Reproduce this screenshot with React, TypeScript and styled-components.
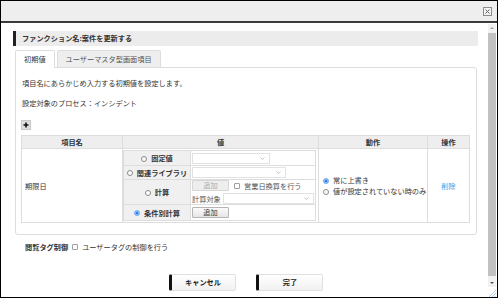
import React from "react";
import styled, { createGlobalStyle } from "styled-components";

const GlobalStyle = createGlobalStyle`
  html, body {
    margin: 0;
    padding: 0;
    background: #fff;
  }
  body {
    font-family: "Noto Sans CJK JP", "Noto Sans", sans-serif;
    font-size: 7.2px;
    color: #333;
  }
  * {
    box-sizing: border-box;
  }
`;

const Window = styled.div`
  width: 498px;
  height: 298px;
  border: 1px solid #000;
  display: flex;
  flex-direction: column;
  background: #fff;
  overflow: hidden;
`;

const TitleBar = styled.div`
  height: 22px;
  flex-shrink: 0;
  background: #eeeeee;
  border-bottom: 2px solid #3a3a3a;
  display: flex;
  justify-content: flex-end;
  align-items: flex-start;
  padding: 6px 5px 0 0;
`;

const Body = styled.div`
  flex: 1;
  display: flex;
  min-height: 0;
`;

const Main = styled.div`
  flex: 1;
  padding: 8px 10px 0 12px;
  display: flex;
  flex-direction: column;
`;

const ScrollColumn = styled.div`
  width: 10px;
  display: flex;
  flex-direction: column;
  padding: 1px 1px 0 0;
`;

const Track = styled.div`
  flex: 1;
  background: #f1f1f1;
  display: flex;
  flex-direction: column;
  align-items: center;
  padding: 3px 0 3px;
`;

const Arrow = styled.div<{ $down?: boolean }>`
  width: 0;
  height: 0;
  border-left: 2px solid transparent;
  border-right: 2px solid transparent;
  ${(p) =>
    p.$down ? "border-top: 2px solid #555;" : "border-bottom: 2px solid #a3a3a3;"}
`;

const Thumb = styled.div`
  width: 8px;
  flex: 1;
  background: #c1c1c1;
  margin: 4px 0 6px;
`;

const Grip = styled.div`
  height: 10px;
  display: flex;
  justify-content: flex-end;
  align-items: flex-end;
`;

const SectionHeader = styled.div`
  height: 15px;
  background: #ececec;
  border-left: 3px solid #222;
  padding-left: 6px;
  font-weight: bold;
  line-height: 15px;
  color: #333;
`;

const Tabs = styled.div`
  display: flex;
  gap: 2px;
  margin: 4px 0 0 2px;
`;

const Tab = styled.div<{ $active?: boolean }>`
  height: 17px;
  padding: 0 8px;
  line-height: 16px;
  border: 1px solid #dddddd;
  border-bottom: none;
  border-radius: 2px 2px 0 0;
  background: ${(p) => (p.$active ? "#fff" : "#eeeeee")};
  color: ${(p) => (p.$active ? "#333" : "#555")};
  position: relative;
  ${(p) => (p.$active ? "margin-bottom: -1px; height: 18px;" : "")}
`;

const Panel = styled.div`
  margin: 0 1px 0 2px;
  border: 1px solid #dddddd;
  border-radius: 0 3px 3px 3px;
  padding: 9px 6px 11px 5px;
  display: flex;
  flex-direction: column;
  align-items: flex-start;
`;

const Desc = styled.div`
  line-height: 12px;
  padding-left: 1px;
  & + & {
    margin-top: 8px;
  }
`;

const PlusButton = styled.div`
  margin-top: 11px;
  width: 10px;
  height: 10px;
  background: #dedede;
  border: 1px solid #c8c8c8;
  display: flex;
  align-items: center;
  justify-content: center;
`;

const Table = styled.table`
  margin-top: 5px;
  width: 448px;
  border-collapse: collapse;
  table-layout: fixed;
`;

const Th = styled.th<{ $w: number }>`
  width: ${(p) => p.$w}px;
  height: 13px;
  background: #eeeeee;
  border: 1px solid #dddddd;
  font-weight: bold;
  padding: 0;
  line-height: 11px;
  text-align: center;
`;

const Td = styled.td<{ $align?: string }>`
  border: 1px solid #dddddd;
  padding: 0;
  height: 73px;
  text-align: ${(p) => p.$align || "left"};
  vertical-align: middle;
`;

const NameText = styled.span`
  padding-left: 3px;
`;

const ValueCell = styled.td`
  border: 1px solid #dddddd;
  padding: 1px 1px 1px 0;
`;

const InnerTable = styled.table`
  width: 193px;
  border-collapse: collapse;
  table-layout: fixed;
`;

const LabelCell = styled.td<{ $h: number }>`
  width: 67px;
  height: ${(p) => p.$h}px;
  background: #f0f0f0;
  border: 1px solid #dddddd;
  text-align: center;
  font-weight: bold;
  padding: 0;
  line-height: 10px;
  white-space: nowrap;
`;

const FieldCell = styled.td`
  border: 1px solid #dddddd;
  padding: 0 1px;
  vertical-align: middle;
  line-height: 10px;
`;

const Radio = styled.span<{ $checked?: boolean }>`
  display: inline-block;
  width: 6px;
  height: 6px;
  border-radius: 50%;
  vertical-align: -0.5px;
  margin-right: 4px;
  border: 1px solid ${(p) => (p.$checked ? "#7fb4ef" : "#8a8a8a")};
  background: ${(p) => (p.$checked ? "#2a7ff0" : "#fff")};
  box-shadow: ${(p) => (p.$checked ? "inset 0 0 0 0.5px #cfe3fb" : "none")};
`;

const Check = styled.span`
  display: inline-block;
  flex-shrink: 0;
  width: 6px;
  height: 6px;
  border: 1px solid #a0a0a0;
  border-radius: 1px;
  vertical-align: -0.5px;
  margin-right: 4px;
  background: #fff;
`;

const SelectBox = styled.div<{ $w?: number }>`
  ${(p) => (p.$w ? `width: ${p.$w}px;` : "flex: 1;")}
  height: 11px;
  border: 1px solid #e2e2e2;
  display: flex;
  justify-content: flex-end;
  align-items: center;
  padding-right: 4px;
  background: #fff;
`;

const SmallButton = styled.div<{ $disabled?: boolean }>`
  width: 37px;
  height: 11px;
  flex-shrink: 0;
  border: 1px solid ${(p) => (p.$disabled ? "#d6d6d6" : "#b5b5b5")};
  background: ${(p) =>
    p.$disabled ? "#eeeeee" : "linear-gradient(#fafafa, #e6e6e6)"};
  color: ${(p) => (p.$disabled ? "#aaaaaa" : "#333")};
  text-align: center;
  line-height: 9px;
  border-radius: 1px;
`;

const Line = styled.div`
  display: flex;
  align-items: center;
  gap: 5px;
  white-space: nowrap;
`;

const CalcTarget = styled.div`
  display: flex;
  align-items: center;
  gap: 2px;
  margin-top: 2px;
  color: #555;
  white-space: nowrap;
`;

const CheckLabel = styled.span`
  display: flex;
  align-items: center;
  color: #555;
`;

const ActionList = styled.div`
  padding-left: 4px;
  display: flex;
  flex-direction: column;
  gap: 1px;
  line-height: 10px;
`;

const DeleteLink = styled.span`
  color: #3b9be8;
`;

const TagRow = styled.div`
  margin-top: 6px;
  padding-left: 12px;
  line-height: 12px;
  display: flex;
  align-items: center;
`;

const TagTitle = styled.span`
  font-weight: bold;
  margin-right: 4px;
`;

const Footer = styled.div`
  margin-top: 21px;
  display: flex;
  justify-content: center;
  gap: 20px;
`;

const FooterButton = styled.div`
  width: 67px;
  height: 17px;
  border: 1px solid #e0e0e0;
  border-left: 3px solid #111;
  background: linear-gradient(#ffffff, #f1f1f1);
  font-weight: bold;
  text-align: center;
  line-height: 15px;
  color: #222;
  border-radius: 2px;
`;

const CloseIcon = () => (
  <svg width="9" height="9" viewBox="0 0 9 9">
    <rect x="0.5" y="0.5" width="8" height="8" fill="#f4f4f4" stroke="#8c8c8c" />
    <path d="M2.5 2.5 L6.5 6.5 M6.5 2.5 L2.5 6.5" stroke="#666" strokeWidth="1" />
  </svg>
);

const Chevron = () => (
  <svg width="5" height="3" viewBox="0 0 5 3">
    <path d="M0.5 0.5 L2.5 2.5 L4.5 0.5" fill="none" stroke="#aaa" strokeWidth="0.7" />
  </svg>
);

const PlusIcon = () => (
  <svg width="6" height="6" viewBox="0 0 6 6">
    <path d="M3 0.5 V5.5 M0.5 3 H5.5" stroke="#111" strokeWidth="1.6" />
  </svg>
);

const GripIcon = () => (
  <svg width="8" height="8" viewBox="0 0 8 8">
    <path d="M8 1 L1 8 M8 4 L4 8 M8 6.5 L6.5 8" stroke="#9cc3e0" strokeWidth="0.8" />
  </svg>
);

export default function App() {
  return (
    <>
      <GlobalStyle />
      <Window>
        <TitleBar>
          <CloseIcon />
        </TitleBar>
        <Body>
          <Main>
            <SectionHeader>ファンクション名:案件を更新する</SectionHeader>
            <Tabs>
              <Tab $active>初期値</Tab>
              <Tab>ユーザーマスタ型画面項目</Tab>
            </Tabs>
            <Panel>
              <Desc>項目名にあらかじめ入力する初期値を設定します。</Desc>
              <Desc>設定対象のプロセス：インシデント</Desc>
              <PlusButton>
                <PlusIcon />
              </PlusButton>
              <Table>
                <thead>
                  <tr>
                    <Th $w={101}>項目名</Th>
                    <Th $w={196}>値</Th>
                    <Th $w={109}>動作</Th>
                    <Th $w={42}>操作</Th>
                  </tr>
                </thead>
                <tbody>
                  <tr>
                    <Td>
                      <NameText>期限日</NameText>
                    </Td>
                    <ValueCell>
                      <InnerTable>
                        <tbody>
                          <tr>
                            <LabelCell $h={15}>
                              <Radio />
                              固定値
                            </LabelCell>
                            <FieldCell>
                              <SelectBox $w={78}>
                                <Chevron />
                              </SelectBox>
                            </FieldCell>
                          </tr>
                          <tr>
                            <LabelCell $h={14}>
                              <Radio />
                              関連ライブラリ
                            </LabelCell>
                            <FieldCell>
                              <SelectBox $w={94}>
                                <Chevron />
                              </SelectBox>
                            </FieldCell>
                          </tr>
                          <tr>
                            <LabelCell $h={24}>
                              <Radio />
                              計算
                            </LabelCell>
                            <FieldCell>
                              <Line>
                                <SmallButton $disabled>追加</SmallButton>
                                <CheckLabel>
                                  <Check />
                                  営業日換算を行う
                                </CheckLabel>
                              </Line>
                              <CalcTarget>
                                計算対象
                                <SelectBox>
                                  <Chevron />
                                </SelectBox>
                              </CalcTarget>
                            </FieldCell>
                          </tr>
                          <tr>
                            <LabelCell $h={16}>
                              <Radio $checked />
                              条件別計算
                            </LabelCell>
                            <FieldCell>
                              <SmallButton>追加</SmallButton>
                            </FieldCell>
                          </tr>
                        </tbody>
                      </InnerTable>
                    </ValueCell>
                    <Td>
                      <ActionList>
                        <span>
                          <Radio $checked />
                          常に上書き
                        </span>
                        <span>
                          <Radio />
                          値が設定されていない時のみ
                        </span>
                      </ActionList>
                    </Td>
                    <Td $align="center">
                      <DeleteLink>削除</DeleteLink>
                    </Td>
                  </tr>
                </tbody>
              </Table>
            </Panel>
            <TagRow>
              <TagTitle>閲覧タグ制御</TagTitle>
              <Check />
              <span>ユーザータグの制御を行う</span>
            </TagRow>
            <Footer>
              <FooterButton>キャンセル</FooterButton>
              <FooterButton>完了</FooterButton>
            </Footer>
          </Main>
          <ScrollColumn>
            <Track>
              <Arrow />
              <Thumb />
              <Arrow $down />
            </Track>
            <Grip>
              <GripIcon />
            </Grip>
          </ScrollColumn>
        </Body>
      </Window>
    </>
  );
}
